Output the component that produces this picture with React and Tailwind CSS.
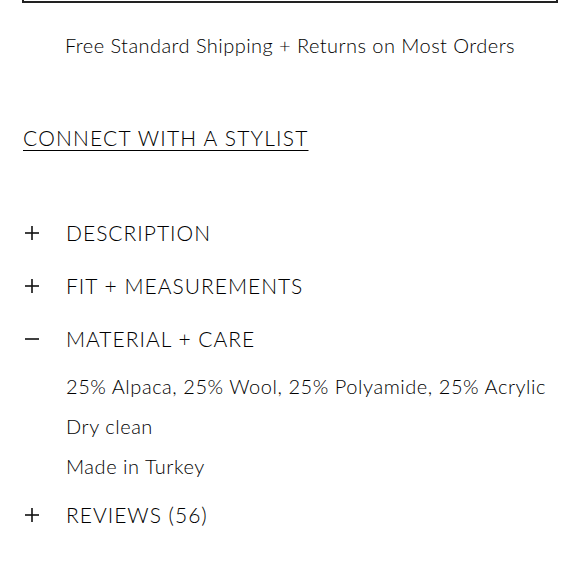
import React from 'react';

const font = { fontFamily: 'Lato, "Noto Sans", sans-serif' };

function Sign({ open }) {
    return (
        <svg width="16" height="16" viewBox="0 0 16 16" className="flex-shrink-0 text-[#111]">
            <line x1="1" y1="8" x2="15" y2="8" stroke="currentColor" strokeWidth="1.6" />
            {!open && <line x1="8" y1="1" x2="8" y2="15" stroke="currentColor" strokeWidth="1.6" />}
        </svg>
    );
}

function Section({ title, open, children }) {
    return (
        <div>
            <div className="flex items-center h-[53px]">
                <div className="w-[43px] pl-[1px]">
                    <Sign open={open} />
                </div>
                <span className="text-[21px] font-light tracking-[1px]">{title}</span>
            </div>
            {open && <div className="pl-[43px] pt-[1px] pb-[2px]">{children}</div>}
        </div>
    );
}

export default function App() {
    return (
        <div className="bg-white w-[580px] h-[580px] overflow-hidden text-black" style={font}>
            {/* button edge cut off at the top */}
            <div className="mx-[22px] mt-[-50px] h-[53px] border-2 border-[#222]" />

            <p className="mt-[27px] h-[30px] leading-[30px] text-center text-[20px] font-light tracking-[0.45px]">
                Free Standard Shipping + Returns on Most Orders
            </p>

            <div className="mt-[63px] px-[23px] h-[30px] leading-[30px]">
                <a className="text-[21px] font-light tracking-[1.2px] underline underline-offset-[4px] decoration-1">
                    CONNECT WITH A STYLIST
                </a>
            </div>

            <div className="mt-[53px] px-[23px]">
                <Section title="DESCRIPTION" />
                <Section title="FIT + MEASUREMENTS" />
                <Section title="MATERIAL + CARE" open>
                    <p className="h-[40px] leading-[40px] text-[20px] font-light tracking-[0.55px]">25% Alpaca, 25% Wool, 25% Polyamide, 25% Acrylic</p>
                    <p className="h-[40px] leading-[40px] text-[20px] font-light tracking-[0.55px]">Dry clean</p>
                    <p className="h-[40px] leading-[40px] text-[20px] font-light tracking-[0.55px]">Made in Turkey</p>
                </Section>
                <Section title="REVIEWS (56)" />
            </div>
        </div>
    );
}
